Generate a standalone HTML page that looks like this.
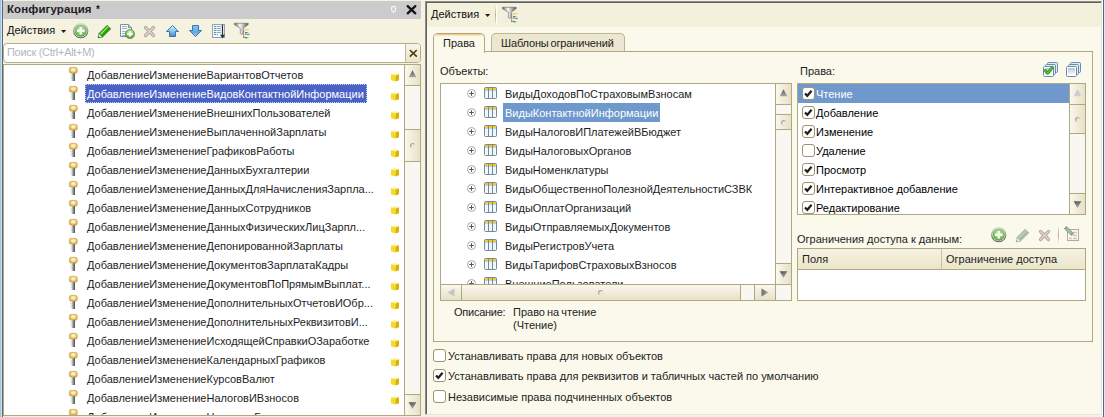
<!DOCTYPE html>
<html><head><meta charset="utf-8">
<style>
*{box-sizing:border-box;margin:0;padding:0}
html,body{width:1105px;height:417px;overflow:hidden}
body{position:relative;background:#f5f2df;font-family:"Liberation Sans",sans-serif;font-size:11px;color:#1e1e1e}
.a{position:absolute}
.t{position:absolute;white-space:nowrap;line-height:19px;height:19px}
svg{position:absolute;overflow:visible}
.bd{border:1px solid #b0a882}
.sbv{background:linear-gradient(180deg,#faf8ee,#e8e1c6);border:1px solid #b0a882}
.sbb{background:linear-gradient(90deg,#faf8ee,#e8e1c6);border:1px solid #b0a882}
</style></head><body>

<div class="a" style="left:0;top:0;width:1px;height:417px;background:#a4c4e0"></div>
<div class="a" style="left:1px;top:0;width:1px;height:417px;background:#cfe2f4"></div>
<div class="a" style="left:2px;top:0;width:1px;height:417px;background:#586878"></div>
<div class="a" style="left:3px;top:1px;width:418px;height:18px;background:#cbcbcb"></div>
<div class="t" style="left:7px;top:0px;font-weight:bold;font-size:11.5px;color:#1e1e1e;line-height:18px;letter-spacing:0.1px">Конфигурация<span style="position:absolute;left:89px;top:1px;font-size:10px">*</span></div>
<svg style="left:391px;top:6px" width="6" height="8"><rect x="0.6" y="0.6" width="4" height="4.6" rx="1" fill="none" stroke="#fafafa" stroke-width="1.1"/><path d="M2.6 5.2V7.5" stroke="#f4f4f4" stroke-width="1.1"/></svg>
<svg style="left:406px;top:5px" width="11" height="10"><path d="M1.7 1.1L9.3 8.3M9.3 1.1L1.7 8.3" stroke="#141414" stroke-width="2.3" stroke-linecap="round"/></svg>
<div class="t" style="left:7px;top:21px;color:#111">Действия</div>
<svg style="left:61px;top:30px" width="6" height="4"><path d="M0 0H5.2L2.6 3Z" fill="#2a1c04"/></svg>
<div class="a" style="left:3px;top:43px;width:418px;height:20px;background:#fff;border:1px solid #b4ac86;border-radius:4px"></div>
<div class="a" style="left:405px;top:44px;width:15px;height:18px;background:linear-gradient(180deg,#f8f6ea,#ebe5cb);border-left:1px solid #c0b894;border-radius:0 3px 3px 0"></div>
<svg style="left:409px;top:49px" width="9" height="9"><path d="M0.8 1L7.8 7.6M7.8 1L0.8 7.6" stroke="#4e3c0a" stroke-width="1.7"/></svg>
<div class="t" style="left:7px;top:43px;color:#b6b6be;letter-spacing:-0.3px">Поиск (Ctrl+Alt+M)</div>
<div class="a bd" style="left:3px;top:64px;width:418px;height:352px;background:#fff"></div>
<div class="a" style="left:4px;top:65px;width:400px;height:350px;overflow:hidden">
<svg style="left:65px;top:2px" width="10" height="15"><defs><radialGradient id="kh" cx="0.5" cy="0.4" r="0.6"><stop offset="0" stop-color="#ffffff"/><stop offset="0.35" stop-color="#f6e6a0"/><stop offset="1" stop-color="#d8a040"/></radialGradient><linearGradient id="ks" x1="0" x2="1"><stop offset="0" stop-color="#e4e4e4"/><stop offset="0.5" stop-color="#9a9a9a"/><stop offset="1" stop-color="#383838"/></linearGradient></defs><rect x="0.4" y="0.4" width="7.8" height="5.8" rx="1.8" fill="url(#kh)" stroke="#d4a848" stroke-width="0.8"/><rect x="2.3" y="6.2" width="3.6" height="7.8" fill="url(#ks)"/><rect x="1.4" y="8" width="1.2" height="1" fill="#d0d0d0"/><rect x="1.4" y="10.5" width="1.2" height="1" fill="#d0d0d0"/></svg>
<div class="t" style="left:83px;top:1px">ДобавлениеИзменениеВариантовОтчетов</div>
<svg style="left:387px;top:8px" width="9" height="9"><path d="M0 1.2L3.6 0L8 1.3L4.4 2.5Z" fill="#fcf0a0"/><path d="M0 1.2L4.4 2.5V8.6L0 7.3Z" fill="#f6dc1c"/><path d="M4.4 2.5L8 1.3V7.3L4.4 8.6Z" fill="#d6b20e"/></svg>
<svg style="left:65px;top:21px" width="10" height="15"><defs><radialGradient id="kh" cx="0.5" cy="0.4" r="0.6"><stop offset="0" stop-color="#ffffff"/><stop offset="0.35" stop-color="#f6e6a0"/><stop offset="1" stop-color="#d8a040"/></radialGradient><linearGradient id="ks" x1="0" x2="1"><stop offset="0" stop-color="#e4e4e4"/><stop offset="0.5" stop-color="#9a9a9a"/><stop offset="1" stop-color="#383838"/></linearGradient></defs><rect x="0.4" y="0.4" width="7.8" height="5.8" rx="1.8" fill="url(#kh)" stroke="#d4a848" stroke-width="0.8"/><rect x="2.3" y="6.2" width="3.6" height="7.8" fill="url(#ks)"/><rect x="1.4" y="8" width="1.2" height="1" fill="#d0d0d0"/><rect x="1.4" y="10.5" width="1.2" height="1" fill="#d0d0d0"/></svg>
<div class="a" style="left:81px;top:19px;width:282px;height:19px;background:#4a62c6;outline:1px dotted #c8d0f0;outline-offset:-1px"></div>
<div class="t" style="left:83px;top:20px;color:#fff">ДобавлениеИзменениеВидовКонтактнойИнформации</div>
<svg style="left:387px;top:27px" width="9" height="9"><path d="M0 1.2L3.6 0L8 1.3L4.4 2.5Z" fill="#fcf0a0"/><path d="M0 1.2L4.4 2.5V8.6L0 7.3Z" fill="#f6dc1c"/><path d="M4.4 2.5L8 1.3V7.3L4.4 8.6Z" fill="#d6b20e"/></svg>
<svg style="left:65px;top:40px" width="10" height="15"><defs><radialGradient id="kh" cx="0.5" cy="0.4" r="0.6"><stop offset="0" stop-color="#ffffff"/><stop offset="0.35" stop-color="#f6e6a0"/><stop offset="1" stop-color="#d8a040"/></radialGradient><linearGradient id="ks" x1="0" x2="1"><stop offset="0" stop-color="#e4e4e4"/><stop offset="0.5" stop-color="#9a9a9a"/><stop offset="1" stop-color="#383838"/></linearGradient></defs><rect x="0.4" y="0.4" width="7.8" height="5.8" rx="1.8" fill="url(#kh)" stroke="#d4a848" stroke-width="0.8"/><rect x="2.3" y="6.2" width="3.6" height="7.8" fill="url(#ks)"/><rect x="1.4" y="8" width="1.2" height="1" fill="#d0d0d0"/><rect x="1.4" y="10.5" width="1.2" height="1" fill="#d0d0d0"/></svg>
<div class="t" style="left:83px;top:39px">ДобавлениеИзменениеВнешнихПользователей</div>
<svg style="left:387px;top:46px" width="9" height="9"><path d="M0 1.2L3.6 0L8 1.3L4.4 2.5Z" fill="#fcf0a0"/><path d="M0 1.2L4.4 2.5V8.6L0 7.3Z" fill="#f6dc1c"/><path d="M4.4 2.5L8 1.3V7.3L4.4 8.6Z" fill="#d6b20e"/></svg>
<svg style="left:65px;top:59px" width="10" height="15"><defs><radialGradient id="kh" cx="0.5" cy="0.4" r="0.6"><stop offset="0" stop-color="#ffffff"/><stop offset="0.35" stop-color="#f6e6a0"/><stop offset="1" stop-color="#d8a040"/></radialGradient><linearGradient id="ks" x1="0" x2="1"><stop offset="0" stop-color="#e4e4e4"/><stop offset="0.5" stop-color="#9a9a9a"/><stop offset="1" stop-color="#383838"/></linearGradient></defs><rect x="0.4" y="0.4" width="7.8" height="5.8" rx="1.8" fill="url(#kh)" stroke="#d4a848" stroke-width="0.8"/><rect x="2.3" y="6.2" width="3.6" height="7.8" fill="url(#ks)"/><rect x="1.4" y="8" width="1.2" height="1" fill="#d0d0d0"/><rect x="1.4" y="10.5" width="1.2" height="1" fill="#d0d0d0"/></svg>
<div class="t" style="left:83px;top:58px">ДобавлениеИзменениеВыплаченнойЗарплаты</div>
<svg style="left:387px;top:65px" width="9" height="9"><path d="M0 1.2L3.6 0L8 1.3L4.4 2.5Z" fill="#fcf0a0"/><path d="M0 1.2L4.4 2.5V8.6L0 7.3Z" fill="#f6dc1c"/><path d="M4.4 2.5L8 1.3V7.3L4.4 8.6Z" fill="#d6b20e"/></svg>
<svg style="left:65px;top:78px" width="10" height="15"><defs><radialGradient id="kh" cx="0.5" cy="0.4" r="0.6"><stop offset="0" stop-color="#ffffff"/><stop offset="0.35" stop-color="#f6e6a0"/><stop offset="1" stop-color="#d8a040"/></radialGradient><linearGradient id="ks" x1="0" x2="1"><stop offset="0" stop-color="#e4e4e4"/><stop offset="0.5" stop-color="#9a9a9a"/><stop offset="1" stop-color="#383838"/></linearGradient></defs><rect x="0.4" y="0.4" width="7.8" height="5.8" rx="1.8" fill="url(#kh)" stroke="#d4a848" stroke-width="0.8"/><rect x="2.3" y="6.2" width="3.6" height="7.8" fill="url(#ks)"/><rect x="1.4" y="8" width="1.2" height="1" fill="#d0d0d0"/><rect x="1.4" y="10.5" width="1.2" height="1" fill="#d0d0d0"/></svg>
<div class="t" style="left:83px;top:77px">ДобавлениеИзменениеГрафиковРаботы</div>
<svg style="left:387px;top:84px" width="9" height="9"><path d="M0 1.2L3.6 0L8 1.3L4.4 2.5Z" fill="#fcf0a0"/><path d="M0 1.2L4.4 2.5V8.6L0 7.3Z" fill="#f6dc1c"/><path d="M4.4 2.5L8 1.3V7.3L4.4 8.6Z" fill="#d6b20e"/></svg>
<svg style="left:65px;top:97px" width="10" height="15"><defs><radialGradient id="kh" cx="0.5" cy="0.4" r="0.6"><stop offset="0" stop-color="#ffffff"/><stop offset="0.35" stop-color="#f6e6a0"/><stop offset="1" stop-color="#d8a040"/></radialGradient><linearGradient id="ks" x1="0" x2="1"><stop offset="0" stop-color="#e4e4e4"/><stop offset="0.5" stop-color="#9a9a9a"/><stop offset="1" stop-color="#383838"/></linearGradient></defs><rect x="0.4" y="0.4" width="7.8" height="5.8" rx="1.8" fill="url(#kh)" stroke="#d4a848" stroke-width="0.8"/><rect x="2.3" y="6.2" width="3.6" height="7.8" fill="url(#ks)"/><rect x="1.4" y="8" width="1.2" height="1" fill="#d0d0d0"/><rect x="1.4" y="10.5" width="1.2" height="1" fill="#d0d0d0"/></svg>
<div class="t" style="left:83px;top:96px">ДобавлениеИзменениеДанныхБухгалтерии</div>
<svg style="left:387px;top:103px" width="9" height="9"><path d="M0 1.2L3.6 0L8 1.3L4.4 2.5Z" fill="#fcf0a0"/><path d="M0 1.2L4.4 2.5V8.6L0 7.3Z" fill="#f6dc1c"/><path d="M4.4 2.5L8 1.3V7.3L4.4 8.6Z" fill="#d6b20e"/></svg>
<svg style="left:65px;top:116px" width="10" height="15"><defs><radialGradient id="kh" cx="0.5" cy="0.4" r="0.6"><stop offset="0" stop-color="#ffffff"/><stop offset="0.35" stop-color="#f6e6a0"/><stop offset="1" stop-color="#d8a040"/></radialGradient><linearGradient id="ks" x1="0" x2="1"><stop offset="0" stop-color="#e4e4e4"/><stop offset="0.5" stop-color="#9a9a9a"/><stop offset="1" stop-color="#383838"/></linearGradient></defs><rect x="0.4" y="0.4" width="7.8" height="5.8" rx="1.8" fill="url(#kh)" stroke="#d4a848" stroke-width="0.8"/><rect x="2.3" y="6.2" width="3.6" height="7.8" fill="url(#ks)"/><rect x="1.4" y="8" width="1.2" height="1" fill="#d0d0d0"/><rect x="1.4" y="10.5" width="1.2" height="1" fill="#d0d0d0"/></svg>
<div class="t" style="left:83px;top:115px">ДобавлениеИзменениеДанныхДляНачисленияЗарпла...</div>
<svg style="left:387px;top:122px" width="9" height="9"><path d="M0 1.2L3.6 0L8 1.3L4.4 2.5Z" fill="#fcf0a0"/><path d="M0 1.2L4.4 2.5V8.6L0 7.3Z" fill="#f6dc1c"/><path d="M4.4 2.5L8 1.3V7.3L4.4 8.6Z" fill="#d6b20e"/></svg>
<svg style="left:65px;top:135px" width="10" height="15"><defs><radialGradient id="kh" cx="0.5" cy="0.4" r="0.6"><stop offset="0" stop-color="#ffffff"/><stop offset="0.35" stop-color="#f6e6a0"/><stop offset="1" stop-color="#d8a040"/></radialGradient><linearGradient id="ks" x1="0" x2="1"><stop offset="0" stop-color="#e4e4e4"/><stop offset="0.5" stop-color="#9a9a9a"/><stop offset="1" stop-color="#383838"/></linearGradient></defs><rect x="0.4" y="0.4" width="7.8" height="5.8" rx="1.8" fill="url(#kh)" stroke="#d4a848" stroke-width="0.8"/><rect x="2.3" y="6.2" width="3.6" height="7.8" fill="url(#ks)"/><rect x="1.4" y="8" width="1.2" height="1" fill="#d0d0d0"/><rect x="1.4" y="10.5" width="1.2" height="1" fill="#d0d0d0"/></svg>
<div class="t" style="left:83px;top:134px">ДобавлениеИзменениеДанныхСотрудников</div>
<svg style="left:387px;top:141px" width="9" height="9"><path d="M0 1.2L3.6 0L8 1.3L4.4 2.5Z" fill="#fcf0a0"/><path d="M0 1.2L4.4 2.5V8.6L0 7.3Z" fill="#f6dc1c"/><path d="M4.4 2.5L8 1.3V7.3L4.4 8.6Z" fill="#d6b20e"/></svg>
<svg style="left:65px;top:154px" width="10" height="15"><defs><radialGradient id="kh" cx="0.5" cy="0.4" r="0.6"><stop offset="0" stop-color="#ffffff"/><stop offset="0.35" stop-color="#f6e6a0"/><stop offset="1" stop-color="#d8a040"/></radialGradient><linearGradient id="ks" x1="0" x2="1"><stop offset="0" stop-color="#e4e4e4"/><stop offset="0.5" stop-color="#9a9a9a"/><stop offset="1" stop-color="#383838"/></linearGradient></defs><rect x="0.4" y="0.4" width="7.8" height="5.8" rx="1.8" fill="url(#kh)" stroke="#d4a848" stroke-width="0.8"/><rect x="2.3" y="6.2" width="3.6" height="7.8" fill="url(#ks)"/><rect x="1.4" y="8" width="1.2" height="1" fill="#d0d0d0"/><rect x="1.4" y="10.5" width="1.2" height="1" fill="#d0d0d0"/></svg>
<div class="t" style="left:83px;top:153px">ДобавлениеИзменениеДанныхФизическихЛицЗарпл...</div>
<svg style="left:387px;top:160px" width="9" height="9"><path d="M0 1.2L3.6 0L8 1.3L4.4 2.5Z" fill="#fcf0a0"/><path d="M0 1.2L4.4 2.5V8.6L0 7.3Z" fill="#f6dc1c"/><path d="M4.4 2.5L8 1.3V7.3L4.4 8.6Z" fill="#d6b20e"/></svg>
<svg style="left:65px;top:173px" width="10" height="15"><defs><radialGradient id="kh" cx="0.5" cy="0.4" r="0.6"><stop offset="0" stop-color="#ffffff"/><stop offset="0.35" stop-color="#f6e6a0"/><stop offset="1" stop-color="#d8a040"/></radialGradient><linearGradient id="ks" x1="0" x2="1"><stop offset="0" stop-color="#e4e4e4"/><stop offset="0.5" stop-color="#9a9a9a"/><stop offset="1" stop-color="#383838"/></linearGradient></defs><rect x="0.4" y="0.4" width="7.8" height="5.8" rx="1.8" fill="url(#kh)" stroke="#d4a848" stroke-width="0.8"/><rect x="2.3" y="6.2" width="3.6" height="7.8" fill="url(#ks)"/><rect x="1.4" y="8" width="1.2" height="1" fill="#d0d0d0"/><rect x="1.4" y="10.5" width="1.2" height="1" fill="#d0d0d0"/></svg>
<div class="t" style="left:83px;top:172px">ДобавлениеИзменениеДепонированнойЗарплаты</div>
<svg style="left:387px;top:179px" width="9" height="9"><path d="M0 1.2L3.6 0L8 1.3L4.4 2.5Z" fill="#fcf0a0"/><path d="M0 1.2L4.4 2.5V8.6L0 7.3Z" fill="#f6dc1c"/><path d="M4.4 2.5L8 1.3V7.3L4.4 8.6Z" fill="#d6b20e"/></svg>
<svg style="left:65px;top:192px" width="10" height="15"><defs><radialGradient id="kh" cx="0.5" cy="0.4" r="0.6"><stop offset="0" stop-color="#ffffff"/><stop offset="0.35" stop-color="#f6e6a0"/><stop offset="1" stop-color="#d8a040"/></radialGradient><linearGradient id="ks" x1="0" x2="1"><stop offset="0" stop-color="#e4e4e4"/><stop offset="0.5" stop-color="#9a9a9a"/><stop offset="1" stop-color="#383838"/></linearGradient></defs><rect x="0.4" y="0.4" width="7.8" height="5.8" rx="1.8" fill="url(#kh)" stroke="#d4a848" stroke-width="0.8"/><rect x="2.3" y="6.2" width="3.6" height="7.8" fill="url(#ks)"/><rect x="1.4" y="8" width="1.2" height="1" fill="#d0d0d0"/><rect x="1.4" y="10.5" width="1.2" height="1" fill="#d0d0d0"/></svg>
<div class="t" style="left:83px;top:191px">ДобавлениеИзменениеДокументовЗарплатаКадры</div>
<svg style="left:387px;top:198px" width="9" height="9"><path d="M0 1.2L3.6 0L8 1.3L4.4 2.5Z" fill="#fcf0a0"/><path d="M0 1.2L4.4 2.5V8.6L0 7.3Z" fill="#f6dc1c"/><path d="M4.4 2.5L8 1.3V7.3L4.4 8.6Z" fill="#d6b20e"/></svg>
<svg style="left:65px;top:211px" width="10" height="15"><defs><radialGradient id="kh" cx="0.5" cy="0.4" r="0.6"><stop offset="0" stop-color="#ffffff"/><stop offset="0.35" stop-color="#f6e6a0"/><stop offset="1" stop-color="#d8a040"/></radialGradient><linearGradient id="ks" x1="0" x2="1"><stop offset="0" stop-color="#e4e4e4"/><stop offset="0.5" stop-color="#9a9a9a"/><stop offset="1" stop-color="#383838"/></linearGradient></defs><rect x="0.4" y="0.4" width="7.8" height="5.8" rx="1.8" fill="url(#kh)" stroke="#d4a848" stroke-width="0.8"/><rect x="2.3" y="6.2" width="3.6" height="7.8" fill="url(#ks)"/><rect x="1.4" y="8" width="1.2" height="1" fill="#d0d0d0"/><rect x="1.4" y="10.5" width="1.2" height="1" fill="#d0d0d0"/></svg>
<div class="t" style="left:83px;top:210px">ДобавлениеИзменениеДокументовПоПрямымВыплат...</div>
<svg style="left:387px;top:217px" width="9" height="9"><path d="M0 1.2L3.6 0L8 1.3L4.4 2.5Z" fill="#fcf0a0"/><path d="M0 1.2L4.4 2.5V8.6L0 7.3Z" fill="#f6dc1c"/><path d="M4.4 2.5L8 1.3V7.3L4.4 8.6Z" fill="#d6b20e"/></svg>
<svg style="left:65px;top:230px" width="10" height="15"><defs><radialGradient id="kh" cx="0.5" cy="0.4" r="0.6"><stop offset="0" stop-color="#ffffff"/><stop offset="0.35" stop-color="#f6e6a0"/><stop offset="1" stop-color="#d8a040"/></radialGradient><linearGradient id="ks" x1="0" x2="1"><stop offset="0" stop-color="#e4e4e4"/><stop offset="0.5" stop-color="#9a9a9a"/><stop offset="1" stop-color="#383838"/></linearGradient></defs><rect x="0.4" y="0.4" width="7.8" height="5.8" rx="1.8" fill="url(#kh)" stroke="#d4a848" stroke-width="0.8"/><rect x="2.3" y="6.2" width="3.6" height="7.8" fill="url(#ks)"/><rect x="1.4" y="8" width="1.2" height="1" fill="#d0d0d0"/><rect x="1.4" y="10.5" width="1.2" height="1" fill="#d0d0d0"/></svg>
<div class="t" style="left:83px;top:229px">ДобавлениеИзменениеДополнительныхОтчетовИОбр...</div>
<svg style="left:387px;top:236px" width="9" height="9"><path d="M0 1.2L3.6 0L8 1.3L4.4 2.5Z" fill="#fcf0a0"/><path d="M0 1.2L4.4 2.5V8.6L0 7.3Z" fill="#f6dc1c"/><path d="M4.4 2.5L8 1.3V7.3L4.4 8.6Z" fill="#d6b20e"/></svg>
<svg style="left:65px;top:249px" width="10" height="15"><defs><radialGradient id="kh" cx="0.5" cy="0.4" r="0.6"><stop offset="0" stop-color="#ffffff"/><stop offset="0.35" stop-color="#f6e6a0"/><stop offset="1" stop-color="#d8a040"/></radialGradient><linearGradient id="ks" x1="0" x2="1"><stop offset="0" stop-color="#e4e4e4"/><stop offset="0.5" stop-color="#9a9a9a"/><stop offset="1" stop-color="#383838"/></linearGradient></defs><rect x="0.4" y="0.4" width="7.8" height="5.8" rx="1.8" fill="url(#kh)" stroke="#d4a848" stroke-width="0.8"/><rect x="2.3" y="6.2" width="3.6" height="7.8" fill="url(#ks)"/><rect x="1.4" y="8" width="1.2" height="1" fill="#d0d0d0"/><rect x="1.4" y="10.5" width="1.2" height="1" fill="#d0d0d0"/></svg>
<div class="t" style="left:83px;top:248px">ДобавлениеИзменениеДополнительныхРеквизитовИ...</div>
<svg style="left:387px;top:255px" width="9" height="9"><path d="M0 1.2L3.6 0L8 1.3L4.4 2.5Z" fill="#fcf0a0"/><path d="M0 1.2L4.4 2.5V8.6L0 7.3Z" fill="#f6dc1c"/><path d="M4.4 2.5L8 1.3V7.3L4.4 8.6Z" fill="#d6b20e"/></svg>
<svg style="left:65px;top:268px" width="10" height="15"><defs><radialGradient id="kh" cx="0.5" cy="0.4" r="0.6"><stop offset="0" stop-color="#ffffff"/><stop offset="0.35" stop-color="#f6e6a0"/><stop offset="1" stop-color="#d8a040"/></radialGradient><linearGradient id="ks" x1="0" x2="1"><stop offset="0" stop-color="#e4e4e4"/><stop offset="0.5" stop-color="#9a9a9a"/><stop offset="1" stop-color="#383838"/></linearGradient></defs><rect x="0.4" y="0.4" width="7.8" height="5.8" rx="1.8" fill="url(#kh)" stroke="#d4a848" stroke-width="0.8"/><rect x="2.3" y="6.2" width="3.6" height="7.8" fill="url(#ks)"/><rect x="1.4" y="8" width="1.2" height="1" fill="#d0d0d0"/><rect x="1.4" y="10.5" width="1.2" height="1" fill="#d0d0d0"/></svg>
<div class="t" style="left:83px;top:267px">ДобавлениеИзменениеИсходящейСправкиОЗаработке</div>
<svg style="left:387px;top:274px" width="9" height="9"><path d="M0 1.2L3.6 0L8 1.3L4.4 2.5Z" fill="#fcf0a0"/><path d="M0 1.2L4.4 2.5V8.6L0 7.3Z" fill="#f6dc1c"/><path d="M4.4 2.5L8 1.3V7.3L4.4 8.6Z" fill="#d6b20e"/></svg>
<svg style="left:65px;top:287px" width="10" height="15"><defs><radialGradient id="kh" cx="0.5" cy="0.4" r="0.6"><stop offset="0" stop-color="#ffffff"/><stop offset="0.35" stop-color="#f6e6a0"/><stop offset="1" stop-color="#d8a040"/></radialGradient><linearGradient id="ks" x1="0" x2="1"><stop offset="0" stop-color="#e4e4e4"/><stop offset="0.5" stop-color="#9a9a9a"/><stop offset="1" stop-color="#383838"/></linearGradient></defs><rect x="0.4" y="0.4" width="7.8" height="5.8" rx="1.8" fill="url(#kh)" stroke="#d4a848" stroke-width="0.8"/><rect x="2.3" y="6.2" width="3.6" height="7.8" fill="url(#ks)"/><rect x="1.4" y="8" width="1.2" height="1" fill="#d0d0d0"/><rect x="1.4" y="10.5" width="1.2" height="1" fill="#d0d0d0"/></svg>
<div class="t" style="left:83px;top:286px">ДобавлениеИзменениеКалендарныхГрафиков</div>
<svg style="left:387px;top:293px" width="9" height="9"><path d="M0 1.2L3.6 0L8 1.3L4.4 2.5Z" fill="#fcf0a0"/><path d="M0 1.2L4.4 2.5V8.6L0 7.3Z" fill="#f6dc1c"/><path d="M4.4 2.5L8 1.3V7.3L4.4 8.6Z" fill="#d6b20e"/></svg>
<svg style="left:65px;top:306px" width="10" height="15"><defs><radialGradient id="kh" cx="0.5" cy="0.4" r="0.6"><stop offset="0" stop-color="#ffffff"/><stop offset="0.35" stop-color="#f6e6a0"/><stop offset="1" stop-color="#d8a040"/></radialGradient><linearGradient id="ks" x1="0" x2="1"><stop offset="0" stop-color="#e4e4e4"/><stop offset="0.5" stop-color="#9a9a9a"/><stop offset="1" stop-color="#383838"/></linearGradient></defs><rect x="0.4" y="0.4" width="7.8" height="5.8" rx="1.8" fill="url(#kh)" stroke="#d4a848" stroke-width="0.8"/><rect x="2.3" y="6.2" width="3.6" height="7.8" fill="url(#ks)"/><rect x="1.4" y="8" width="1.2" height="1" fill="#d0d0d0"/><rect x="1.4" y="10.5" width="1.2" height="1" fill="#d0d0d0"/></svg>
<div class="t" style="left:83px;top:305px">ДобавлениеИзменениеКурсовВалют</div>
<svg style="left:387px;top:312px" width="9" height="9"><path d="M0 1.2L3.6 0L8 1.3L4.4 2.5Z" fill="#fcf0a0"/><path d="M0 1.2L4.4 2.5V8.6L0 7.3Z" fill="#f6dc1c"/><path d="M4.4 2.5L8 1.3V7.3L4.4 8.6Z" fill="#d6b20e"/></svg>
<svg style="left:65px;top:325px" width="10" height="15"><defs><radialGradient id="kh" cx="0.5" cy="0.4" r="0.6"><stop offset="0" stop-color="#ffffff"/><stop offset="0.35" stop-color="#f6e6a0"/><stop offset="1" stop-color="#d8a040"/></radialGradient><linearGradient id="ks" x1="0" x2="1"><stop offset="0" stop-color="#e4e4e4"/><stop offset="0.5" stop-color="#9a9a9a"/><stop offset="1" stop-color="#383838"/></linearGradient></defs><rect x="0.4" y="0.4" width="7.8" height="5.8" rx="1.8" fill="url(#kh)" stroke="#d4a848" stroke-width="0.8"/><rect x="2.3" y="6.2" width="3.6" height="7.8" fill="url(#ks)"/><rect x="1.4" y="8" width="1.2" height="1" fill="#d0d0d0"/><rect x="1.4" y="10.5" width="1.2" height="1" fill="#d0d0d0"/></svg>
<div class="t" style="left:83px;top:324px">ДобавлениеИзменениеНалоговИВзносов</div>
<svg style="left:387px;top:331px" width="9" height="9"><path d="M0 1.2L3.6 0L8 1.3L4.4 2.5Z" fill="#fcf0a0"/><path d="M0 1.2L4.4 2.5V8.6L0 7.3Z" fill="#f6dc1c"/><path d="M4.4 2.5L8 1.3V7.3L4.4 8.6Z" fill="#d6b20e"/></svg>
<svg style="left:65px;top:344px" width="10" height="15"><defs><radialGradient id="kh" cx="0.5" cy="0.4" r="0.6"><stop offset="0" stop-color="#ffffff"/><stop offset="0.35" stop-color="#f6e6a0"/><stop offset="1" stop-color="#d8a040"/></radialGradient><linearGradient id="ks" x1="0" x2="1"><stop offset="0" stop-color="#e4e4e4"/><stop offset="0.5" stop-color="#9a9a9a"/><stop offset="1" stop-color="#383838"/></linearGradient></defs><rect x="0.4" y="0.4" width="7.8" height="5.8" rx="1.8" fill="url(#kh)" stroke="#d4a848" stroke-width="0.8"/><rect x="2.3" y="6.2" width="3.6" height="7.8" fill="url(#ks)"/><rect x="1.4" y="8" width="1.2" height="1" fill="#d0d0d0"/><rect x="1.4" y="10.5" width="1.2" height="1" fill="#d0d0d0"/></svg>
<div class="t" style="left:83px;top:343px">ДобавлениеИзменениеНастроекБухгалтерии</div>
<svg style="left:387px;top:350px" width="9" height="9"><path d="M0 1.2L3.6 0L8 1.3L4.4 2.5Z" fill="#fcf0a0"/><path d="M0 1.2L4.4 2.5V8.6L0 7.3Z" fill="#f6dc1c"/><path d="M4.4 2.5L8 1.3V7.3L4.4 8.6Z" fill="#d6b20e"/></svg>
</div>
<div class="a" style="left:404px;top:64px;width:17px;height:352px;background:#f8f7f1;border-left:1px solid #b0a882;border-right:1px solid #b0a882"></div>
<div class="a sbb" style="left:404px;top:64px;width:17px;height:22px"></div>
<svg style="left:408px;top:70px" width="9" height="8"><defs><linearGradient id="ua40464" x1="0" x2="0" y1="0" y2="1"><stop offset="0" stop-color="#5a5a5a"/><stop offset="1" stop-color="#a8a8a8"/></linearGradient></defs><path d="M4.5 0.3L8.3 7.3H0.7Z" fill="url(#ua40464)"/></svg>
<div class="a sbb" style="left:404px;top:129px;width:17px;height:33px"></div>
<svg style="left:408.5px;top:141.5px" width="8" height="8"><circle cx="3.6" cy="3.6" r="2.6" fill="#aaa69a"/><circle cx="4.4" cy="4.4" r="2.3" fill="#ede8d6"/></svg>
<div class="a sbb" style="left:404px;top:394px;width:17px;height:22px"></div>
<svg style="left:408px;top:402px" width="9" height="8"><defs><linearGradient id="da40464" x1="0" x2="0.3" y1="0" y2="1"><stop offset="0" stop-color="#4a4a4a"/><stop offset="1" stop-color="#b0b0b0"/></linearGradient></defs><path d="M0.7 0.2H8.3L4.5 7.2Z" fill="url(#da40464)"/></svg>
<div class="a" style="left:425px;top:1px;width:677px;height:414px;background:#fbf9ec;border-left:1px solid #8c8c8c;border-top:1px solid #8c8c8c;border-right:1px solid #e2e2e2;border-bottom:1px solid #e2e2e2"></div><div class="a" style="left:426px;top:2px;width:675px;height:412px;border-left:1px solid #626262;border-top:1px solid #626262"></div>
<div class="a" style="left:1102px;top:1px;width:1px;height:415px;background:#ffffff"></div>
<div class="a" style="left:1103px;top:0;width:1px;height:417px;background:#586878"></div>
<div class="a" style="left:1104px;top:0;width:1px;height:417px;background:#dce8f6"></div>
<div class="a" style="left:427px;top:3px;width:674px;height:24px;background:#f3f0dc"></div>
<div class="t" style="left:431px;top:5px;color:#111">Действия</div>
<svg style="left:485px;top:14px" width="6" height="4"><path d="M0 0H5.2L2.6 3Z" fill="#2a1c04"/></svg>
<div class="a" style="left:495px;top:5px;width:1px;height:20px;background:linear-gradient(180deg,#f3f0dc,#b8ae88 50%,#f3f0dc)"></div><div class="a" style="left:496px;top:5px;width:1px;height:20px;background:#fffef8"></div>
<svg style="left:502px;top:7px" width="17" height="16"><defs><linearGradient id="g1" x1="0" x2="1"><stop offset="0" stop-color="#5e5e5e"/><stop offset="0.4" stop-color="#fafafa"/><stop offset="0.75" stop-color="#9a9a9a"/><stop offset="1" stop-color="#4e4e4e"/></linearGradient></defs><path d="M0.3 0.3H14.2V1.6L9.3 5.2V10.6Q7.7 12.2 6.3 10.6V5.2L0.3 1.6Z" fill="url(#g1)" stroke="#6a6a6a" stroke-width="0.6"/><path d="M9.7 7V14.5" stroke="#808080" stroke-width="0.8"/><rect x="11" y="6" width="2.6" height="1.3" fill="#f4cc3c"/><rect x="13.8" y="6" width="1.6" height="1.3" fill="#d8d8d8"/><rect x="11" y="9" width="2.6" height="1.3" fill="#b0602a"/><rect x="13.8" y="9" width="1.6" height="1.3" fill="#d8d8d8"/><rect x="12.8" y="10.8" width="2.8" height="1.3" fill="#2ea8e8"/><rect x="11.2" y="10.9" width="1" height="1" fill="#606060"/><rect x="11" y="14" width="2.6" height="1.3" fill="#3c9a30"/><rect x="13.8" y="14" width="1.6" height="1.3" fill="#d8d8d8"/><rect x="9.3" y="13.8" width="1.2" height="1.2" fill="#606060"/></svg>
<div class="a" style="left:433px;top:51px;width:660px;height:291px;border:1px solid #b0a882;background:#fbf9ec"></div>
<div class="a" style="left:491px;top:33px;width:134px;height:18px;background:#ece7d0;border:1px solid #bfb791;border-bottom:none;border-radius:5px 5px 0 0"></div>
<div class="t" style="left:501px;top:34px;color:#222;word-spacing:-1px;letter-spacing:-0.15px">Шаблоны ограничений</div>
<div class="a" style="left:433px;top:33px;width:52px;height:20px;background:#fbf9ec;border:1px solid #b0a882;border-bottom:none;border-radius:5px 5px 0 0"></div>
<div class="a" style="left:437px;top:34px;width:44px;height:1px;background:#f6c878"></div><div class="a" style="left:435px;top:35px;width:48px;height:1px;background:#fbe6c0"></div>
<div class="t" style="left:443px;top:34px;color:#222">Права</div>
<div class="t" style="left:440px;top:62px;color:#222">Объекты:</div>
<div class="t" style="left:800px;top:62px;color:#222">Права:</div>
<div class="a bd" style="left:440px;top:83px;width:352px;height:218px;background:#fff"></div>
<div class="a" style="left:441px;top:84px;width:334px;height:200px;overflow:hidden">
<svg style="left:26px;top:5px" width="10" height="10"><circle cx="4.5" cy="4.5" r="4" fill="#fff" stroke="#a8a8a8" stroke-width="1"/><path d="M2.2 4.5H6.8M4.5 2.2V6.8" stroke="#555" stroke-width="1"/></svg>
<svg style="left:43px;top:3px" width="14" height="13"><rect x="0.5" y="0.5" width="12" height="11" rx="1" fill="#eef8fc" stroke="#76889a"/><rect x="1" y="1" width="11" height="2" fill="#f6cc20"/><path d="M1 3.5H12" stroke="#b8d4ec" stroke-width="1"/><path d="M4.5 0.5V11.5M8.5 0.5V11.5" stroke="#76889a"/></svg>
<div class="t" style="left:64px;top:1px">ВидыДоходовПоСтраховымВзносам</div>
<svg style="left:26px;top:24px" width="10" height="10"><circle cx="4.5" cy="4.5" r="4" fill="#fff" stroke="#a8a8a8" stroke-width="1"/><path d="M2.2 4.5H6.8M4.5 2.2V6.8" stroke="#555" stroke-width="1"/></svg>
<svg style="left:43px;top:22px" width="14" height="13"><rect x="0.5" y="0.5" width="12" height="11" rx="1" fill="#eef8fc" stroke="#76889a"/><rect x="1" y="1" width="11" height="2" fill="#f6cc20"/><path d="M1 3.5H12" stroke="#b8d4ec" stroke-width="1"/><path d="M4.5 0.5V11.5M8.5 0.5V11.5" stroke="#76889a"/></svg>
<div class="a" style="left:62px;top:19px;width:157px;height:19px;background:#6f98cc"></div>
<div class="t" style="left:64px;top:20px;color:#fff">ВидыКонтактнойИнформации</div>
<svg style="left:26px;top:43px" width="10" height="10"><circle cx="4.5" cy="4.5" r="4" fill="#fff" stroke="#a8a8a8" stroke-width="1"/><path d="M2.2 4.5H6.8M4.5 2.2V6.8" stroke="#555" stroke-width="1"/></svg>
<svg style="left:43px;top:41px" width="14" height="13"><rect x="0.5" y="0.5" width="12" height="11" rx="1" fill="#eef8fc" stroke="#76889a"/><rect x="1" y="1" width="11" height="2" fill="#f6cc20"/><path d="M1 3.5H12" stroke="#b8d4ec" stroke-width="1"/><path d="M4.5 0.5V11.5M8.5 0.5V11.5" stroke="#76889a"/></svg>
<div class="t" style="left:64px;top:39px">ВидыНалоговИПлатежейВБюджет</div>
<svg style="left:26px;top:62px" width="10" height="10"><circle cx="4.5" cy="4.5" r="4" fill="#fff" stroke="#a8a8a8" stroke-width="1"/><path d="M2.2 4.5H6.8M4.5 2.2V6.8" stroke="#555" stroke-width="1"/></svg>
<svg style="left:43px;top:60px" width="14" height="13"><rect x="0.5" y="0.5" width="12" height="11" rx="1" fill="#eef8fc" stroke="#76889a"/><rect x="1" y="1" width="11" height="2" fill="#f6cc20"/><path d="M1 3.5H12" stroke="#b8d4ec" stroke-width="1"/><path d="M4.5 0.5V11.5M8.5 0.5V11.5" stroke="#76889a"/></svg>
<div class="t" style="left:64px;top:58px">ВидыНалоговыхОрганов</div>
<svg style="left:26px;top:81px" width="10" height="10"><circle cx="4.5" cy="4.5" r="4" fill="#fff" stroke="#a8a8a8" stroke-width="1"/><path d="M2.2 4.5H6.8M4.5 2.2V6.8" stroke="#555" stroke-width="1"/></svg>
<svg style="left:43px;top:79px" width="14" height="13"><rect x="0.5" y="0.5" width="12" height="11" rx="1" fill="#eef8fc" stroke="#76889a"/><rect x="1" y="1" width="11" height="2" fill="#f6cc20"/><path d="M1 3.5H12" stroke="#b8d4ec" stroke-width="1"/><path d="M4.5 0.5V11.5M8.5 0.5V11.5" stroke="#76889a"/></svg>
<div class="t" style="left:64px;top:77px">ВидыНоменклатуры</div>
<svg style="left:26px;top:100px" width="10" height="10"><circle cx="4.5" cy="4.5" r="4" fill="#fff" stroke="#a8a8a8" stroke-width="1"/><path d="M2.2 4.5H6.8M4.5 2.2V6.8" stroke="#555" stroke-width="1"/></svg>
<svg style="left:43px;top:98px" width="14" height="13"><rect x="0.5" y="0.5" width="12" height="11" rx="1" fill="#eef8fc" stroke="#76889a"/><rect x="1" y="1" width="11" height="2" fill="#f6cc20"/><path d="M1 3.5H12" stroke="#b8d4ec" stroke-width="1"/><path d="M4.5 0.5V11.5M8.5 0.5V11.5" stroke="#76889a"/></svg>
<div class="t" style="left:64px;top:96px">ВидыОбщественноПолезнойДеятельностиСЗВК</div>
<svg style="left:26px;top:119px" width="10" height="10"><circle cx="4.5" cy="4.5" r="4" fill="#fff" stroke="#a8a8a8" stroke-width="1"/><path d="M2.2 4.5H6.8M4.5 2.2V6.8" stroke="#555" stroke-width="1"/></svg>
<svg style="left:43px;top:117px" width="14" height="13"><rect x="0.5" y="0.5" width="12" height="11" rx="1" fill="#eef8fc" stroke="#76889a"/><rect x="1" y="1" width="11" height="2" fill="#f6cc20"/><path d="M1 3.5H12" stroke="#b8d4ec" stroke-width="1"/><path d="M4.5 0.5V11.5M8.5 0.5V11.5" stroke="#76889a"/></svg>
<div class="t" style="left:64px;top:115px">ВидыОплатОрганизаций</div>
<svg style="left:26px;top:138px" width="10" height="10"><circle cx="4.5" cy="4.5" r="4" fill="#fff" stroke="#a8a8a8" stroke-width="1"/><path d="M2.2 4.5H6.8M4.5 2.2V6.8" stroke="#555" stroke-width="1"/></svg>
<svg style="left:43px;top:136px" width="14" height="13"><rect x="0.5" y="0.5" width="12" height="11" rx="1" fill="#eef8fc" stroke="#76889a"/><rect x="1" y="1" width="11" height="2" fill="#f6cc20"/><path d="M1 3.5H12" stroke="#b8d4ec" stroke-width="1"/><path d="M4.5 0.5V11.5M8.5 0.5V11.5" stroke="#76889a"/></svg>
<div class="t" style="left:64px;top:134px">ВидыОтправляемыхДокументов</div>
<svg style="left:26px;top:157px" width="10" height="10"><circle cx="4.5" cy="4.5" r="4" fill="#fff" stroke="#a8a8a8" stroke-width="1"/><path d="M2.2 4.5H6.8M4.5 2.2V6.8" stroke="#555" stroke-width="1"/></svg>
<svg style="left:43px;top:155px" width="14" height="13"><rect x="0.5" y="0.5" width="12" height="11" rx="1" fill="#eef8fc" stroke="#76889a"/><rect x="1" y="1" width="11" height="2" fill="#f6cc20"/><path d="M1 3.5H12" stroke="#b8d4ec" stroke-width="1"/><path d="M4.5 0.5V11.5M8.5 0.5V11.5" stroke="#76889a"/></svg>
<div class="t" style="left:64px;top:153px">ВидыРегистровУчета</div>
<svg style="left:26px;top:176px" width="10" height="10"><circle cx="4.5" cy="4.5" r="4" fill="#fff" stroke="#a8a8a8" stroke-width="1"/><path d="M2.2 4.5H6.8M4.5 2.2V6.8" stroke="#555" stroke-width="1"/></svg>
<svg style="left:43px;top:174px" width="14" height="13"><rect x="0.5" y="0.5" width="12" height="11" rx="1" fill="#eef8fc" stroke="#76889a"/><rect x="1" y="1" width="11" height="2" fill="#f6cc20"/><path d="M1 3.5H12" stroke="#b8d4ec" stroke-width="1"/><path d="M4.5 0.5V11.5M8.5 0.5V11.5" stroke="#76889a"/></svg>
<div class="t" style="left:64px;top:172px">ВидыТарифовСтраховыхВзносов</div>
<svg style="left:26px;top:195px" width="10" height="10"><circle cx="4.5" cy="4.5" r="4" fill="#fff" stroke="#a8a8a8" stroke-width="1"/><path d="M2.2 4.5H6.8M4.5 2.2V6.8" stroke="#555" stroke-width="1"/></svg>
<svg style="left:43px;top:193px" width="14" height="13"><rect x="0.5" y="0.5" width="12" height="11" rx="1" fill="#eef8fc" stroke="#76889a"/><rect x="1" y="1" width="11" height="2" fill="#f6cc20"/><path d="M1 3.5H12" stroke="#b8d4ec" stroke-width="1"/><path d="M4.5 0.5V11.5M8.5 0.5V11.5" stroke="#76889a"/></svg>
<div class="t" style="left:64px;top:191px">ВнешниеПользователи</div>
</div>
<div class="a" style="left:775px;top:83px;width:17px;height:202px;background:#f8f7f1;border-left:1px solid #b0a882;border-right:1px solid #b0a882"></div>
<div class="a sbb" style="left:775px;top:83px;width:17px;height:22px"></div>
<svg style="left:779px;top:89px" width="9" height="8"><defs><linearGradient id="ua77583" x1="0" x2="0" y1="0" y2="1"><stop offset="0" stop-color="#5a5a5a"/><stop offset="1" stop-color="#a8a8a8"/></linearGradient></defs><path d="M4.5 0.3L8.3 7.3H0.7Z" fill="url(#ua77583)"/></svg>
<div class="a sbb" style="left:775px;top:114px;width:17px;height:16px"></div>
<svg style="left:779.5px;top:118.5px" width="8" height="8"><circle cx="3.6" cy="3.6" r="2.6" fill="#aaa69a"/><circle cx="4.4" cy="4.4" r="2.3" fill="#ede8d6"/></svg>
<div class="a sbb" style="left:775px;top:263px;width:17px;height:22px"></div>
<svg style="left:779px;top:271px" width="9" height="8"><defs><linearGradient id="da77583" x1="0" x2="0.3" y1="0" y2="1"><stop offset="0" stop-color="#4a4a4a"/><stop offset="1" stop-color="#b0b0b0"/></linearGradient></defs><path d="M0.7 0.2H8.3L4.5 7.2Z" fill="url(#da77583)"/></svg>
<div class="a" style="left:440px;top:284px;width:352px;height:17px;background:#f8f7f1;border:1px solid #b0a882"></div>
<div class="a sbv" style="left:440px;top:284px;width:22px;height:17px"></div>
<svg style="left:447px;top:288px" width="8" height="9"><path d="M0.5 4.5L7.5 0.5V8.5Z" fill="#c4c4c4"/></svg>
<div class="a sbv" style="left:461px;top:284px;width:280px;height:17px"></div>
<svg style="left:596.5px;top:288.5px" width="8" height="8"><circle cx="3.6" cy="3.6" r="2.6" fill="#aaa69a"/><circle cx="4.4" cy="4.4" r="2.3" fill="#ede8d6"/></svg>
<div class="a sbv" style="left:754px;top:284px;width:22px;height:17px"></div>
<svg style="left:761px;top:288px" width="8" height="9"><defs><linearGradient id="ra" x1="0" x2="1"><stop offset="0" stop-color="#6a6a6a"/><stop offset="1" stop-color="#b0b0b0"/></linearGradient></defs><path d="M0.5 0.5L7.5 4.5L0.5 8.5Z" fill="url(#ra)"/></svg>
<div class="a" style="left:775px;top:284px;width:17px;height:17px;background:#f8f7f1;border:1px solid #b0a882"></div>
<div class="a bd" style="left:797px;top:83px;width:289px;height:132px;background:#fff"></div>
<div class="a" style="left:798px;top:84px;width:272px;height:130px;overflow:hidden">
<div class="a" style="left:0;top:0px;width:272px;height:19px;background:#6f98cc"></div>
<svg style="left:4px;top:3px" width="13" height="13"><rect x="0.5" y="0.5" width="12" height="12" rx="2.5" fill="#fff" stroke="#9c946c"/><path d="M3.00 6.40L5.30 8.80L9.60 3.80" fill="none" stroke="#202020" stroke-width="2.20" stroke-linejoin="miter" stroke-miterlimit="3"/></svg>
<div class="t" style="left:18px;top:1px;color:#fff">Чтение</div>
<svg style="left:4px;top:22px" width="13" height="13"><rect x="0.5" y="0.5" width="12" height="12" rx="2.5" fill="#fff" stroke="#9c946c"/><path d="M3.00 6.40L5.30 8.80L9.60 3.80" fill="none" stroke="#202020" stroke-width="2.20" stroke-linejoin="miter" stroke-miterlimit="3"/></svg>
<div class="t" style="left:18px;top:20px;color:#000">Добавление</div>
<svg style="left:4px;top:41px" width="13" height="13"><rect x="0.5" y="0.5" width="12" height="12" rx="2.5" fill="#fff" stroke="#9c946c"/><path d="M3.00 6.40L5.30 8.80L9.60 3.80" fill="none" stroke="#202020" stroke-width="2.20" stroke-linejoin="miter" stroke-miterlimit="3"/></svg>
<div class="t" style="left:18px;top:39px;color:#000">Изменение</div>
<svg style="left:4px;top:60px" width="13" height="13"><rect x="0.5" y="0.5" width="12" height="12" rx="2.5" fill="#fff" stroke="#9c946c"/></svg>
<div class="t" style="left:18px;top:58px;color:#000">Удаление</div>
<svg style="left:4px;top:79px" width="13" height="13"><rect x="0.5" y="0.5" width="12" height="12" rx="2.5" fill="#fff" stroke="#9c946c"/><path d="M3.00 6.40L5.30 8.80L9.60 3.80" fill="none" stroke="#202020" stroke-width="2.20" stroke-linejoin="miter" stroke-miterlimit="3"/></svg>
<div class="t" style="left:18px;top:77px;color:#000">Просмотр</div>
<svg style="left:4px;top:98px" width="13" height="13"><rect x="0.5" y="0.5" width="12" height="12" rx="2.5" fill="#fff" stroke="#9c946c"/><path d="M3.00 6.40L5.30 8.80L9.60 3.80" fill="none" stroke="#202020" stroke-width="2.20" stroke-linejoin="miter" stroke-miterlimit="3"/></svg>
<div class="t" style="left:18px;top:96px;color:#000">Интерактивное добавление</div>
<svg style="left:4px;top:117px" width="13" height="13"><rect x="0.5" y="0.5" width="12" height="12" rx="2.5" fill="#fff" stroke="#9c946c"/><path d="M3.00 6.40L5.30 8.80L9.60 3.80" fill="none" stroke="#202020" stroke-width="2.20" stroke-linejoin="miter" stroke-miterlimit="3"/></svg>
<div class="t" style="left:18px;top:115px;color:#000">Редактирование</div>
</div>
<div class="a" style="left:1069px;top:83px;width:17px;height:132px;background:#f8f7f1;border-left:1px solid #b0a882;border-right:1px solid #b0a882"></div>
<div class="a sbb" style="left:1069px;top:83px;width:17px;height:22px"></div>
<svg style="left:1073px;top:89px" width="9" height="8"><defs><linearGradient id="ua106983" x1="0" x2="0" y1="0" y2="1"><stop offset="0" stop-color="#c4c4c4"/><stop offset="1" stop-color="#d0d0d0"/></linearGradient></defs><path d="M4.5 0.3L8.3 7.3H0.7Z" fill="url(#ua106983)"/></svg>
<div class="a sbb" style="left:1069px;top:104px;width:17px;height:30px"></div>
<svg style="left:1073.5px;top:115.5px" width="8" height="8"><circle cx="3.6" cy="3.6" r="2.6" fill="#aaa69a"/><circle cx="4.4" cy="4.4" r="2.3" fill="#ede8d6"/></svg>
<div class="a sbb" style="left:1069px;top:193px;width:17px;height:22px"></div>
<svg style="left:1073px;top:201px" width="9" height="8"><defs><linearGradient id="da106983" x1="0" x2="0.3" y1="0" y2="1"><stop offset="0" stop-color="#4a4a4a"/><stop offset="1" stop-color="#b0b0b0"/></linearGradient></defs><path d="M0.7 0.2H8.3L4.5 7.2Z" fill="url(#da106983)"/></svg>
<svg style="left:1043px;top:61px" width="16" height="16"><defs><linearGradient id="g2" x1="0" x2="0" y1="0" y2="1"><stop offset="0" stop-color="#b0c4d8"/><stop offset="1" stop-color="#ffffff"/></linearGradient></defs><rect x="4.5" y="1.5" width="10" height="10" rx="1.2" fill="#e4ecf4" stroke="#6a8cae"/><rect x="2.5" y="3.5" width="10" height="10" rx="1.2" fill="#e4ecf4" stroke="#6a8cae"/><rect x="0.5" y="5.5" width="10" height="10" rx="1.2" fill="#fff" stroke="#6a8cae"/><rect x="2" y="7" width="7" height="7" fill="url(#g2)"/><path d="M2.2 9.6L4.6 12.2L9.2 6.6" fill="none" stroke="#2c8a18" stroke-width="3" stroke-linejoin="round" stroke-linecap="round"/><path d="M2.2 9.6L4.6 12.2L9.2 6.6" fill="none" stroke="#58c030" stroke-width="1.6" stroke-linejoin="round" stroke-linecap="round"/></svg>
<svg style="left:1066px;top:61px" width="16" height="16"><defs><linearGradient id="g3" x1="0" x2="0" y1="0" y2="1"><stop offset="0" stop-color="#b0c4d8"/><stop offset="1" stop-color="#ffffff"/></linearGradient></defs><rect x="4.5" y="1.5" width="10" height="10" rx="1.2" fill="#e4ecf4" stroke="#6a8cae"/><rect x="2.5" y="3.5" width="10" height="10" rx="1.2" fill="#e4ecf4" stroke="#6a8cae"/><rect x="0.5" y="5.5" width="10" height="10" rx="1.2" fill="#fff" stroke="#6a8cae"/><rect x="2" y="7" width="7" height="7" fill="url(#g3)"/></svg>
<div class="t" style="left:797px;top:230px;color:#222">Ограничения доступа к данным:</div>
<svg style="left:991px;top:227px" width="16" height="16"><defs><linearGradient id="g5" x1="0" x2="0" y1="0" y2="1"><stop offset="0" stop-color="#d4d4d4"/><stop offset="1" stop-color="#3c423c"/></linearGradient><radialGradient id="g4" cx="0.5" cy="0.4" r="0.6"><stop offset="0" stop-color="#c4e8b0"/><stop offset="0.6" stop-color="#88c86c"/><stop offset="1" stop-color="#54a03c"/></radialGradient></defs><circle cx="7.75" cy="7.75" r="7.6" fill="url(#g5)"/><circle cx="7.75" cy="7.75" r="6.7" fill="#cce8bc"/><circle cx="7.75" cy="7.75" r="6.0" fill="url(#g4)"/><path d="M3.9 7.75H11.6M7.75 3.9V11.6" stroke="#fff" stroke-width="2.4"/></svg>
<svg style="left:1016px;top:229px" width="13" height="13"><path d="M9.2 0.2L12.8 3.8L4.3 12.3L0.2 12.8L0.7 8.7Z" fill="#a8bca0" stroke="#94a88c" stroke-width="0.6" stroke-linejoin="round"/><path d="M2.6 9.2L10.4 1.4" stroke="#c4d4bc" stroke-width="1.3"/><path d="M0.9 9L3.9 12L1.8 12.4Q0.6 11.6 0.6 10.4Z" fill="#f8f8f4"/><path d="M0.2 12.8L0.5 10.9L2.2 12.5Z" fill="#94a88c"/></svg>
<svg style="left:1039px;top:230px" width="11" height="11"><path d="M1.5 1.5L9.5 9.5M9.5 1.5L1.5 9.5" stroke="#b4a4a4" stroke-width="3.2" stroke-linecap="round"/><path d="M1.5 1.5L9.5 9.5M9.5 1.5L1.5 9.5" stroke="#e0d6d2" stroke-width="1.4" stroke-linecap="round"/></svg>
<div class="a" style="left:1058px;top:225px;width:1px;height:20px;background:linear-gradient(180deg,#fbf9ec,#b8ae88 50%,#fbf9ec)"></div><div class="a" style="left:1059px;top:225px;width:1px;height:20px;background:#ffffff"></div>
<svg style="left:1065px;top:227px" width="15" height="15"><rect x="2.5" y="2.5" width="11" height="11" fill="#fbf9ec" stroke="#b4aa96"/><path d="M8 5.5H12M8 8.5H12M4 11.5H7M8 11.5H12" stroke="#cfc6b4" stroke-width="1.4"/><path d="M1.5 1.5L6.5 6.5" stroke="#8ca486" stroke-width="3.6" stroke-linecap="square"/><path d="M1.8 1.8L6.2 6.2" stroke="#b4c8ac" stroke-width="1.4"/></svg>
<div class="a bd" style="left:797px;top:248px;width:289px;height:53px;background:#fff"></div>
<div class="a" style="left:798px;top:249px;width:287px;height:21px;background:linear-gradient(180deg,#f5f2e2,#ebe5c9);border-bottom:1px solid #b0a882"></div>
<div class="a" style="left:941px;top:249px;width:1px;height:20px;background:#c8c0a0"></div>
<div class="t" style="left:802px;top:250px;color:#222">Поля</div>
<div class="t" style="left:946px;top:250px;color:#222">Ограничение доступа</div>
<div class="t" style="left:454px;top:303px;color:#222;letter-spacing:-0.25px">Описание:</div>
<div class="t" style="left:513px;top:303px;color:#222;word-spacing:-1px">Право на чтение</div>
<div class="t" style="left:513px;top:316px;color:#222">(Чтение)</div>
<svg style="left:433px;top:349px" width="13" height="13"><rect x="0.5" y="0.5" width="12" height="12" rx="2.5" fill="#fff" stroke="#9c946c"/></svg>
<div class="t" style="left:448px;top:347px;color:#222">Устанавливать права для новых объектов</div>
<svg style="left:433px;top:369px" width="13" height="13"><rect x="0.5" y="0.5" width="12" height="12" rx="2.5" fill="#fff" stroke="#9c946c"/><path d="M3.00 6.40L5.30 8.80L9.60 3.80" fill="none" stroke="#202020" stroke-width="2.20" stroke-linejoin="miter" stroke-miterlimit="3"/></svg>
<div class="t" style="left:448px;top:367px;color:#222">Устанавливать права для реквизитов и табличных частей по умолчанию</div>
<svg style="left:433px;top:390px" width="13" height="13"><rect x="0.5" y="0.5" width="12" height="12" rx="2.5" fill="#fff" stroke="#9c946c"/></svg>
<div class="t" style="left:448px;top:388px;color:#222">Независимые права подчиненных объектов</div>
<svg style="left:73px;top:23px" width="16" height="16"><defs><linearGradient id="g7" x1="0" x2="0" y1="0" y2="1"><stop offset="0" stop-color="#d4d4d4"/><stop offset="1" stop-color="#3c423c"/></linearGradient><radialGradient id="g6" cx="0.5" cy="0.4" r="0.6"><stop offset="0" stop-color="#c4e8b0"/><stop offset="0.6" stop-color="#88c86c"/><stop offset="1" stop-color="#54a03c"/></radialGradient></defs><circle cx="7.75" cy="7.75" r="7.6" fill="url(#g7)"/><circle cx="7.75" cy="7.75" r="6.7" fill="#cce8bc"/><circle cx="7.75" cy="7.75" r="6.0" fill="url(#g6)"/><path d="M3.9 7.75H11.6M7.75 3.9V11.6" stroke="#fff" stroke-width="2.4"/></svg>
<svg style="left:98px;top:25px" width="13" height="13"><path d="M9.2 0.2L12.8 3.8L4.3 12.3L0.2 12.8L0.7 8.7Z" fill="#2c9c14" stroke="#167008" stroke-width="0.6" stroke-linejoin="round"/><path d="M2.6 9.2L10.4 1.4" stroke="#9cf070" stroke-width="1.3"/><path d="M0.9 9L3.9 12L1.8 12.4Q0.6 11.6 0.6 10.4Z" fill="#f8f8f4"/><path d="M0.2 12.8L0.5 10.9L2.2 12.5Z" fill="#167008"/></svg>
<svg style="left:120px;top:24px" width="15" height="15"><path d="M0.5 0.5H8.5L11.5 3.5V12.5H0.5Z" fill="#f6f9fc" stroke="#7890a8"/><path d="M8.5 0.5V3.5H11.5" fill="#c8d8e8" stroke="#7890a8"/><path d="M2 2.5H7M2 4.5H7M2 7.5H9M2 9.5H7M2 11.5H6" stroke="#a4b4c4"/><defs><radialGradient id="g8" cx="0.5" cy="0.35" r="0.7"><stop offset="0" stop-color="#e8f8e0"/><stop offset="0.5" stop-color="#88c870"/><stop offset="1" stop-color="#3c8a28"/></radialGradient></defs><circle cx="10" cy="10" r="4.6" fill="url(#g8)" stroke="#4a7a3a" stroke-width="0.6"/><path d="M7.4 10H12.6M10 7.4V12.6" stroke="#fff" stroke-width="1.8"/></svg>
<svg style="left:144px;top:26px" width="11" height="11"><path d="M1.5 1.5L9.5 9.5M9.5 1.5L1.5 9.5" stroke="#b4a4a4" stroke-width="3.2" stroke-linecap="round"/><path d="M1.5 1.5L9.5 9.5M9.5 1.5L1.5 9.5" stroke="#e0d6d2" stroke-width="1.4" stroke-linecap="round"/></svg>
<svg style="left:166px;top:25px" width="13" height="12"><defs><linearGradient id="g9" x1="0" x2="0" y1="0" y2="1"><stop offset="0" stop-color="#d8f0ff"/><stop offset="0.5" stop-color="#8cc8f0"/><stop offset="1" stop-color="#3c88c8"/></linearGradient></defs><path d="M6.5 0.5L12.5 6.5H9.5V11.5H3.5V6.5H0.5Z" fill="url(#g9)" stroke="#2e6aa8" stroke-width="0.9" stroke-linejoin="round"/></svg>
<svg style="left:189px;top:25px" width="13" height="12"><defs><linearGradient id="g10" x1="0" x2="0" y1="0" y2="1"><stop offset="0" stop-color="#8cc8f0"/><stop offset="0.6" stop-color="#60a8e0"/><stop offset="1" stop-color="#9cd0f4"/></linearGradient></defs><path d="M6.5 11.5L12.5 5.5H9.5V0.5H3.5V5.5H0.5Z" fill="url(#g10)" stroke="#2e6aa8" stroke-width="0.9" stroke-linejoin="round"/></svg>
<svg style="left:212px;top:24px" width="14" height="15"><rect x="0.5" y="0.5" width="12" height="13" fill="#f4f8fc" stroke="#8ca4bc"/><path d="M2 2.5H4M2 4.5H4M2 6.5H4M2 8.5H4M2 10.5H4" stroke="#5a8cc0"/><path d="M4.5 2.5H9M4.5 4.5H9M4.5 6.5H9M4.5 8.5H9M4.5 10.5H6" stroke="#9aa6b4"/><path d="M10.5 0.5V13" stroke="#1e3040" stroke-width="1.2"/><path d="M8 10.8L10.5 14.6L13 10.8Z" fill="#1e3040"/></svg>
<svg style="left:234px;top:23px" width="17" height="16"><defs><linearGradient id="g11" x1="0" x2="1"><stop offset="0" stop-color="#5e5e5e"/><stop offset="0.4" stop-color="#fafafa"/><stop offset="0.75" stop-color="#9a9a9a"/><stop offset="1" stop-color="#4e4e4e"/></linearGradient></defs><path d="M0.3 0.3H14.2V1.6L9.3 5.2V10.6Q7.7 12.2 6.3 10.6V5.2L0.3 1.6Z" fill="url(#g11)" stroke="#6a6a6a" stroke-width="0.6"/><path d="M9.7 7V14.5" stroke="#808080" stroke-width="0.8"/><rect x="11" y="6" width="2.6" height="1.3" fill="#f4cc3c"/><rect x="13.8" y="6" width="1.6" height="1.3" fill="#d8d8d8"/><rect x="11" y="9" width="2.6" height="1.3" fill="#b0602a"/><rect x="13.8" y="9" width="1.6" height="1.3" fill="#d8d8d8"/><rect x="12.8" y="10.8" width="2.8" height="1.3" fill="#2ea8e8"/><rect x="11.2" y="10.9" width="1" height="1" fill="#606060"/><rect x="11" y="14" width="2.6" height="1.3" fill="#3c9a30"/><rect x="13.8" y="14" width="1.6" height="1.3" fill="#d8d8d8"/><rect x="9.3" y="13.8" width="1.2" height="1.2" fill="#606060"/></svg>
</body></html>
